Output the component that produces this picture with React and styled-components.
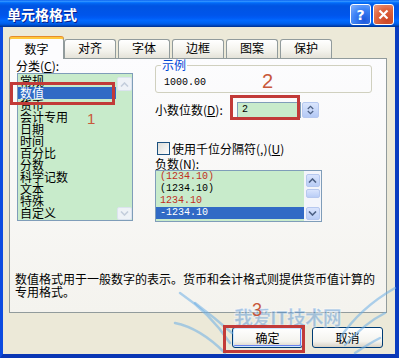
import React from 'react';
import styled, { createGlobalStyle } from 'styled-components';

const GlobalStyle = createGlobalStyle`
  html, body { margin: 0; padding: 0; }
  body {
    width: 399px;
    height: 358px;
    overflow: hidden;
    background: #ece9d8;
    font-family: "Noto Sans CJK SC", "DejaVu Sans", sans-serif;
  }
  * { box-sizing: border-box; }
`;

const Window = styled.div`
  position: relative;
  width: 399px;
  height: 358px;
  display: flex;
  flex-direction: column;
  overflow: hidden;
`;

const TitleBar = styled.div`
  flex: none;
  height: 27px;
  display: flex;
  align-items: center;
  justify-content: space-between;
  padding: 0 5px 0 7px;
  background: linear-gradient(
    to bottom,
    #0058ee 0%, #3593ff 4%, #288eff 6%, #127dff 8%, #036ffc 10%,
    #0262ee 14%, #0057e5 20%, #0054e3 24%, #0055eb 56%, #005bf5 66%,
    #026afe 76%, #0062ef 86%, #0052d6 92%, #0040ab 96%, #003092 100%
  );
`;

const Title = styled.span`
  color: #fff;
  font-size: 14px;
  font-weight: 700;
  line-height: 16px;
  text-shadow: 1px 1px 0 #0a1e8a;
`;

const TitleButtons = styled.div`
  display: flex;
  gap: 2px;
  margin-top: 2px;
`;

const CaptionButton = styled.div`
  width: 21px;
  height: 21px;
  border: 1px solid #fff;
  border-radius: 3px;
  display: flex;
  align-items: center;
  justify-content: center;
  color: #fff;
  font-family: "DejaVu Sans", sans-serif;
  font-size: 14px;
  font-weight: 700;
  background: ${p => (p.$close
    ? 'radial-gradient(circle at 70% 80%, #cc4625 0%, #e0643e 55%, #f0a089 100%)'
    : 'radial-gradient(circle at 70% 80%, #1d57db 0%, #3d84f7 55%, #8cb6ff 100%)')};
  box-shadow: inset 0 0 1px rgba(0, 0, 0, 0.3);
`;

const Body = styled.div`
  flex: 1;
  display: flex;
  flex-direction: column;
  background: #ece9d8;
  border-style: solid;
  border-color: #0b46d6 #0a3cbf #0936b4 #0c4be0;
  border-width: 0 4px 4px 3px;
  padding: 10px 8px 0 6px;
`;

const TabStrip = styled.div`
  display: flex;
  align-items: flex-end;
  height: 22px;
  margin-bottom: -1px;
  position: relative;
  z-index: 1;
`;

const Tab = styled.div`
  width: ${p => (p.$active ? 55 : 52)}px;
  height: ${p => (p.$active ? 22 : 19)}px;
  margin-bottom: ${p => (p.$active ? 0 : 1)}px;
  margin-left: ${p => (p.$tight ? 0 : 2)}px;
  border: 1px solid #919b9c;
  border-bottom: none;
  border-top: ${p => (p.$active ? '2px solid #ffc83c' : '1px solid #919b9c')};
  border-radius: 3px 3px 0 0;
  box-shadow: ${p => (p.$active ? '0 -1px 0 #e68b2c' : 'none')};
  background: ${p => (p.$active ? '#fcfcfe' : 'linear-gradient(#ffffff, #f3f2ec 60%, #e4e2d8)')};
  font-size: 12px;
  line-height: 16px;
  text-align: center;
  padding-top: ${p => (p.$active ? 2 : 0)}px;
  color: #000;
`;

const Panel = styled.div`
  height: 255px;
  border: 1px solid #919b9c;
  background: linear-gradient(#fcfcfe, #f4f3ee);
  padding: 0 0 0 6px;
  display: flex;
  flex-direction: column;
`;

const TopRow = styled.div`
  display: flex;
  align-items: flex-start;
`;

const LeftCol = styled.div`
  width: 117px;
  display: flex;
  flex-direction: column;
`;

const RightCol = styled.div`
  width: 217px;
  margin-left: 22px;
  display: flex;
  flex-direction: column;
`;

const Label = styled.div`
  font-size: 12px;
  line-height: ${p => p.$lh || 14}px;
  margin-top: ${p => p.$mt || 0}px;
  color: #000;
  white-space: nowrap;
`;

const ListBox = styled.div`
  width: ${p => p.$w}px;
  height: ${p => p.$h}px;
  margin-left: ${p => p.$ml || 0}px;
  border: 1px solid #7f9db9;
  background: #c8ebcb;
  display: flex;
  overflow: hidden;
`;

const ListItems = styled.div`
  flex: 1;
  padding-top: ${p => p.$pt || 0}px;
  overflow: hidden;
`;

const ListRow = styled.div`
  height: 12px;
  line-height: 12px;
  font-size: ${p => (p.$mono ? 10 : 12)}px;
  font-family: ${p => (p.$mono ? '"Liberation Mono", monospace' : 'inherit')};
  padding-left: ${p => (p.$mono ? 4 : 2)}px;
  white-space: nowrap;
  background: ${p => (p.$selected ? '#316ac5' : 'transparent')};
  color: ${p => (p.$selected ? '#fff' : p.$red ? '#c0301e' : '#000')};
`;

const ScrollBar = styled.div`
  width: ${p => p.$w}px;
  display: flex;
  flex-direction: column;
  align-items: center;
  padding: ${p => p.$pad};
  background: ${p => p.$track || 'transparent'};
`;

const ScrollBtn = styled.div`
  width: ${p => p.$w || 15}px;
  height: ${p => p.$h || 14}px;
  border: 1px solid ${p => (p.$faded ? '#dbe3ee' : '#b6c8ef')};
  border-radius: 2px;
  background: ${p => (p.$faded ? '#eef2f7' : 'linear-gradient(#d9e4fd, #b9cdf6)')};
  display: flex;
  align-items: center;
  justify-content: center;
  margin-top: ${p => p.$mt || 0}px;
`;

const Spacer = styled.div`
  flex: 1;
`;

const GroupBox = styled.fieldset`
  margin: 0;
  padding: 0 0 3px 8px;
  border: 1px solid #d0d0bf;
  border-radius: 3px;
  min-inline-size: 0;
`;

const Legend = styled.legend`
  padding: 0 1px;
  margin-left: -3px;
  font-size: 12px;
  line-height: 12px;
  color: #0046d5;
`;

const Mono = styled.div`
  font-family: "Liberation Mono", monospace;
  font-size: 10px;
  line-height: 12px;
  margin-top: ${p => p.$mt || 0}px;
  color: #000;
`;

const SpinRow = styled.div`
  display: flex;
  align-items: center;
  height: 16px;
  margin-top: 9px;
`;

const SpinLabel = styled(Label)`
  width: 82px;
`;

const SpinInput = styled.div`
  width: 64px;
  height: 16px;
  border: 1px solid #7f9db9;
  background: #c8ebcb;
  padding-left: 4px;
  font-family: "Liberation Mono", monospace;
  font-size: 10px;
  line-height: 14px;
`;

const SpinButtons = styled.div`
  width: 17px;
  height: 16px;
  margin-left: 1px;
  border: 1px solid #b6c8ef;
  border-radius: 2px;
  background: linear-gradient(#dbe6fd, #b4c9f5);
  display: flex;
  flex-direction: column;
  align-items: center;
  justify-content: center;
`;

const CheckRow = styled.div`
  display: flex;
  align-items: center;
  height: 13px;
  margin-top: 24px;
  padding-left: 2px;
  gap: 2px;
  font-size: 12px;
  white-space: nowrap;
`;

const CheckBox = styled.div`
  width: 13px;
  height: 13px;
  border: 1px solid #1c5180;
  background: linear-gradient(135deg, #dcdcd7, #ffffff);
`;

const Description = styled.div`
  margin-top: 50px;
  margin-left: -1px;
  font-size: 12px;
  line-height: 13px;
  color: #000;
  white-space: nowrap;
`;

const ButtonRow = styled.div`
  display: flex;
  justify-content: flex-end;
  gap: 9px;
  margin-top: 14px;
  margin-right: 4px;
`;

const XPButton = styled.div`
  width: 71px;
  height: 21px;
  border: 1px solid #003c74;
  border-radius: 3px;
  background: linear-gradient(#ffffff, #f4f3ee 70%, #d8d2c6);
  box-shadow: ${p => (p.$default ? 'inset 0 0 0 1px #cee7ff, inset -1px -1px 0 1px #6982ee' : 'none')};
  font-size: 12px;
  line-height: 19px;
  text-align: center;
  color: #000;
`;

const RedBox = styled.div`
  position: absolute;
  left: ${p => p.$x}px;
  top: ${p => p.$y}px;
  width: ${p => p.$w}px;
  height: ${p => p.$h}px;
  border: 3px solid #c23a38;
  z-index: 5;
`;

const StepNumber = styled.div`
  position: absolute;
  left: ${p => p.$x}px;
  top: ${p => p.$y}px;
  font-family: "Liberation Sans", sans-serif;
  font-size: ${p => p.$size}px;
  line-height: 1;
  color: #c8583a;
  z-index: 5;
`;

const Watermark = styled.div`
  position: absolute;
  left: 170px;
  top: 283px;
  width: 229px;
  height: 75px;
  z-index: 4;
  pointer-events: none;
`;

const WatermarkText = styled.span`
  position: absolute;
  left: 64px;
  top: 20px;
  font-family: "Noto Sans CJK SC", sans-serif;
  font-size: 19px;
  font-weight: 900;
  letter-spacing: -1px;
  color: rgba(70, 140, 215, 0.45);
  -webkit-text-stroke: 1px rgba(255, 255, 255, 0.5);
  white-space: nowrap;
`;

const Chevron = ({ up, color = '#4d6185', w = 9, h = 5 }) => (
  <svg width={w} height={h} viewBox="0 0 9 5">
    <path
      d={up ? 'M1 4.5 L4.5 1 L8 4.5' : 'M1 0.5 L4.5 4 L8 0.5'}
      fill="none"
      stroke={color}
      strokeWidth="1.6"
    />
  </svg>
);

const categories = ['常规', '数值', '货币', '会计专用', '日期', '时间', '百分比', '分数', '科学记数', '文本', '特殊', '自定义'];

const negatives = [
  { text: '(1234.10)', red: true },
  { text: '(1234.10)' },
  { text: '1234.10', red: true },
  { text: '-1234.10', selected: true },
];

const tabs = ['数字', '对齐', '字体', '边框', '图案', '保护'];

export default function App() {
  return (
    <>
      <GlobalStyle />
      <Window>
        <TitleBar>
          <Title>单元格格式</Title>
          <TitleButtons>
            <CaptionButton>?</CaptionButton>
            <CaptionButton $close>
              <svg width="11" height="11" viewBox="0 0 11 11">
                <path d="M1.5 1.5 L9.5 9.5 M9.5 1.5 L1.5 9.5" stroke="#fff" strokeWidth="2.2" />
              </svg>
            </CaptionButton>
          </TitleButtons>
        </TitleBar>

        <Body>
          <TabStrip>
            {tabs.map((t, i) => (
              <Tab key={t} $active={i === 0} $tight={i <= 1}>{t}</Tab>
            ))}
          </TabStrip>

          <Panel>
            <TopRow>
              <LeftCol>
                <Label>分类(<u>C</u>):</Label>
                <ListBox $w={116} $h={148} $ml={1}>
                  <ListItems $pt={1}>
                    {categories.map((c, i) => (
                      <ListRow key={c} $selected={i === 1}>{c}</ListRow>
                    ))}
                  </ListItems>
                  <ScrollBar $w={16} $pad="3px 0 0 0">
                    <ScrollBtn $faded><Chevron up color="#c4cedc" /></ScrollBtn>
                    <Spacer />
                    <ScrollBtn $faded $h={13}><Chevron color="#c4cedc" /></ScrollBtn>
                  </ScrollBar>
                </ListBox>
              </LeftCol>

              <RightCol>
                <GroupBox>
                  <Legend>示例</Legend>
                  <Mono $mt={6}>1000.00</Mono>
                </GroupBox>

                <SpinRow>
                  <SpinLabel>小数位数(<u>D</u>):</SpinLabel>
                  <SpinInput>2</SpinInput>
                  <SpinButtons>
                    <Chevron up w={7} h={5} />
                    <Chevron w={7} h={5} />
                  </SpinButtons>
                </SpinRow>

                <CheckRow>
                  <CheckBox />
                  <span>使用千位分隔符(,)(<u>U</u>)</span>
                </CheckRow>

                <Label $lh={13} $mt={2}>负数(<u>N</u>):</Label>
                <ListBox $w={167} $h={52}>
                  <ListItems>
                    {negatives.map((n, i) => (
                      <ListRow key={i} $mono $red={n.red} $selected={n.selected}>{n.text}</ListRow>
                    ))}
                  </ListItems>
                  <ScrollBar $w={17} $pad="3px 0 1px 0" $track="#f3f5fb">
                    <ScrollBtn $w={14} $h={13}><Chevron up /></ScrollBtn>
                    <ScrollBtn $w={14} $h={9} $mt={2} />
                    <Spacer />
                    <ScrollBtn $w={14} $h={13}><Chevron /></ScrollBtn>
                  </ScrollBar>
                </ListBox>
              </RightCol>
            </TopRow>

            <Description>
              数值格式用于一般数字的表示。货币和会计格式则提供货币值计算的
              <br />
              专用格式。
            </Description>
          </Panel>

          <ButtonRow>
            <XPButton $default>确定</XPButton>
            <XPButton>取消</XPButton>
          </ButtonRow>
        </Body>

        <Watermark>
          <svg width="229" height="75" viewBox="0 0 229 75">
            <g fill="none" stroke="rgba(110,175,230,0.55)" strokeWidth="2.5" strokeLinecap="round">
              <path d="M10 10 Q40 30 60 60" />
              <path d="M25 20 Q45 35 62 50" />
              <path d="M5 40 Q30 45 55 70" />
              <path d="M225 5 Q190 25 170 55" />
              <path d="M215 30 Q195 40 175 62" />
              <path d="M210 55 Q200 60 185 70" />
            </g>
          </svg>
          <WatermarkText>我爱IT技术网</WatermarkText>
        </Watermark>

        <RedBox $x={10} $y={82} $w={105} $h={23} />
        <StepNumber $x={87} $y={111} $size={15}>1</StepNumber>
        <RedBox $x={230} $y={95} $w={70} $h={25} />
        <StepNumber $x={262} $y={71} $size={20}>2</StepNumber>
        <RedBox $x={223} $y={325} $w={82} $h={28} />
        <StepNumber $x={252} $y={301} $size={18}>3</StepNumber>
      </Window>
    </>
  );
}
